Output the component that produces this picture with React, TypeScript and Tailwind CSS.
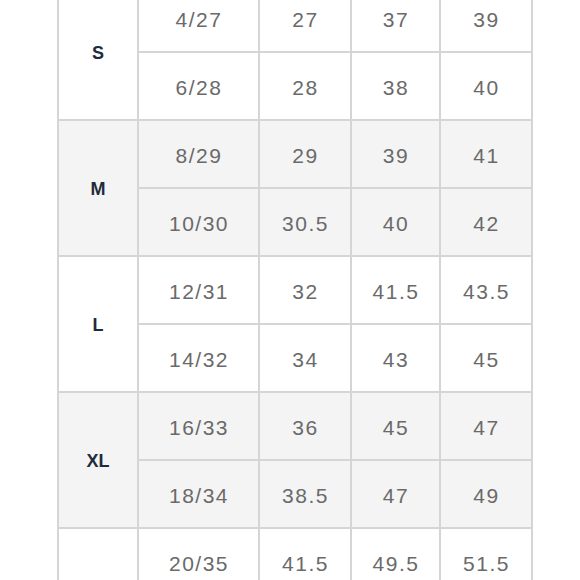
import React from "react";

type Group = {
  label: string;
  rows: string[][];
};

const GROUPS: Group[] = [
  { label: "S", rows: [["4/27", "27", "37", "39"], ["6/28", "28", "38", "40"]] },
  { label: "M", rows: [["8/29", "29", "39", "41"], ["10/30", "30.5", "40", "42"]] },
  { label: "L", rows: [["12/31", "32", "41.5", "43.5"], ["14/32", "34", "43", "45"]] },
  { label: "XL", rows: [["16/33", "36", "45", "47"], ["18/34", "38.5", "47", "49"]] },
  { label: "", rows: [["20/35", "41.5", "49.5", "51.5"], ["22/36", "44", "52", "54"]] },
];

const numFont = { fontFamily: "'Liberation Sans', Arial, sans-serif" };

export default function App() {
  return (
    <div className="h-[580px] w-[580px] overflow-hidden bg-white">
      <div className="-mt-[15px] ml-[57px] w-[476px] border-x-2 border-[#d5d5d5] bg-[#d5d5d5]">
        {GROUPS.map((group, gi) => {
          const shaded = gi % 2 === 1;
          const cellBg = shaded ? "bg-[#f4f4f4]" : "bg-white";
          return (
            <div
              key={gi}
              className="grid grid-cols-[78px_119px_90px_87px_90px] grid-rows-[66px_66px] gap-[2px] border-b-2 border-[#d5d5d5]"
            >
              <div
                className={`row-span-2 flex items-center justify-center pt-[2px] text-[18px] font-bold text-[#1e2b3c] ${cellBg}`}
                style={{ fontFamily: "'Liberation Sans', Arial, sans-serif" }}
              >
                {group.label}
              </div>
              {group.rows.map((row, ri) =>
                row.map((val, ci) => (
                  <div
                    key={`${ri}-${ci}`}
                    className={`flex items-center justify-center pl-[1px] pt-[4px] text-[21px] font-normal tracking-[1.5px] text-[#6a6a6a] ${cellBg}`}
                    style={numFont}
                  >
                    {val}
                  </div>
                ))
              )}
            </div>
          );
        })}
      </div>
    </div>
  );
}
